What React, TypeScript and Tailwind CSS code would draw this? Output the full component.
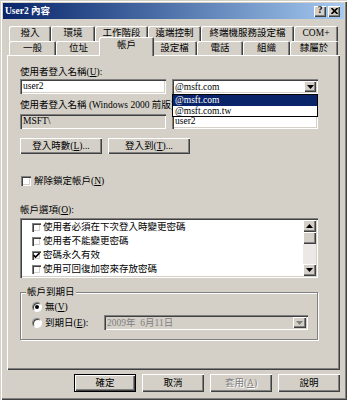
import React from "react";

const raised =
  "shadow-[inset_1px_1px_#fff,inset_-1px_-1px_#404040,inset_-2px_-2px_#808080]";
const sunken =
  "shadow-[inset_1px_1px_#808080,inset_2px_2px_#404040,inset_-1px_-1px_#fff,inset_-2px_-2px_#d4d0c8]";
const tabEdge =
  "shadow-[inset_1px_1px_#fff,inset_-1px_0_#404040,inset_-2px_0_#808080]";

const row1 = [
  { t: "撥入", w: "w-[42px]" },
  { t: "環境", w: "w-[44px]" },
  { t: "工作階段", w: "w-[53px]" },
  { t: "遠端控制", w: "w-[53px]" },
  { t: "終端機服務設定檔", w: "w-[93px]" },
  { t: "COM+", w: "w-[44px]" },
];

const row2 = [
  { t: "一般", w: "w-[47px]" },
  { t: "位址", w: "w-[45px]" },
  { t: "帳戶", w: "w-[55px]", on: true },
  { t: "設定檔", w: "w-[45px]" },
  { t: "電話", w: "w-[46px]" },
  { t: "組織", w: "w-[47px]" },
  { t: "隸屬於", w: "w-[48px]" },
];

const options = [
  { t: "使用者必須在下次登入時變更密碼", on: false },
  { t: "使用者不能變更密碼", on: false },
  { t: "密碼永久有效", on: true },
  { t: "使用可回復加密來存放密碼", on: false },
];

const Arrow = ({ up, gray }: { up?: boolean; gray?: boolean }) => (
  <svg width="7" height="4" viewBox="0 0 7 4">
    <path
      d={up ? "M3.5 0 L7 4 L0 4 Z" : "M0 0 L7 0 L3.5 4 Z"}
      fill={gray ? "#808080" : "#000"}
    />
  </svg>
);

const CheckBox = ({ on, size }: { on?: boolean; size: string }) => (
  <span className={`relative flex shrink-0 items-center justify-center bg-white ${size} ${sunken}`}>
    {on && (
      <svg width="7" height="7" viewBox="0 0 7 7">
        <path d="M0.5 3 L2.5 5 L6.5 1" stroke="#000" strokeWidth="1.6" fill="none" />
      </svg>
    )}
  </span>
);

const Radio = ({ on }: { on?: boolean }) => (
  <span className="flex h-[10px] w-[10px] shrink-0 items-center justify-center rounded-full border border-t-[#808080] border-l-[#808080] border-r-white border-b-white bg-white shadow-[inset_1px_1px_#404040]">
    {on && <span className="h-[4px] w-[4px] rounded-full bg-black" />}
  </span>
);

export default function App() {
  return (
    <div className="flex h-[400px] w-[347px] flex-col bg-[#d4d0c8] p-[3px] font-['Liberation_Serif','Noto_Sans_CJK_TC',serif] text-[9.5px] leading-[12px] text-black shadow-[inset_1px_1px_#d4d0c8,inset_2px_2px_#fff,inset_-1px_-1px_#404040,inset_-2px_-2px_#808080]">
      {/* title bar */}
      <div className="flex h-[16px] items-center bg-linear-to-r from-[#0a246a] to-[#a6caf0] pl-[2px] pr-[4px]">
        <span className="font-bold text-white">User2 內容</span>
        <div className="ml-auto flex gap-[2px]">
          <span className={`flex h-[11px] w-[12px] items-center justify-center bg-[#d4d0c8] font-bold leading-none ${raised}`}>
            ?
          </span>
          <span className={`flex h-[11px] w-[12px] items-center justify-center bg-[#d4d0c8] ${raised}`}>
            <svg width="7" height="6" viewBox="0 0 7 6">
              <path d="M0.5 0 L6.5 6 M6.5 0 L0.5 6" stroke="#000" strokeWidth="1.6" />
            </svg>
          </span>
        </div>
      </div>

      {/* tabs */}
      <div className="mt-[7px] flex h-[15px] pl-[6px]">
        {row1.map((tab) => (
          <div
            key={tab.t}
            className={`${tab.w} flex justify-center rounded-t-[2px] pt-[1px] ${tabEdge}`}
          >
            {tab.t}
          </div>
        ))}
      </div>
      <div className="flex h-[14px] pl-[6px]">
        {row2.map((tab) =>
          tab.on ? (
            <div
              key={tab.t}
              className={`${tab.w} relative z-10 -mx-[2px] -mt-[4px] flex h-[19px] justify-center rounded-t-[2px] bg-[#d4d0c8] pt-[2px] ${tabEdge}`}
            >
              {tab.t}
            </div>
          ) : (
            <div
              key={tab.t}
              className={`${tab.w} flex items-center justify-center rounded-t-[2px] ${tabEdge}`}
            >
              {tab.t}
            </div>
          )
        )}
      </div>

      {/* page */}
      <div className={`ml-[4px] flex h-[315px] w-[333px] flex-col pl-[13px] ${raised}`}>
        <div className="mt-[11px]">
          使用者登入名稱(<u>U</u>):
        </div>
        <div className="mt-[1px] flex h-[15px] gap-[6px]">
          <div className={`w-[146px] bg-white pl-[3px] leading-[15px] ${sunken}`}>user2</div>
          <div className={`relative flex w-[146px] items-center bg-white pl-[3px] pr-[2px] ${sunken}`}>
            <span>@msft.com</span>
            <span className={`ml-auto flex h-[11px] w-[12px] items-center justify-center bg-[#d4d0c8] ${raised}`}>
              <Arrow />
            </span>
            <div className="absolute left-0 top-full z-20 w-full border border-black bg-white">
              <div className="h-[11px] bg-[#0a246a] pl-[2px] leading-[11px] text-white">@msft.com</div>
              <div className="h-[10px] pl-[2px] leading-[10px]">@msft.com.tw</div>
            </div>
          </div>
        </div>

        <div className="mt-[5px] w-[152px] overflow-hidden whitespace-nowrap">
          使用者登入名稱 (Windows 2000 前版)(<u>W</u>):
        </div>
        <div className="mt-[3px] flex h-[15px] gap-[6px]">
          <div className={`w-[146px] bg-[#d4d0c8] pl-[3px] leading-[15px] ${sunken}`}>MSFT\</div>
          <div className={`w-[146px] bg-white pl-[3px] leading-[15px] ${sunken}`}>user2</div>
        </div>

        <div className="mt-[9px] flex gap-[6px]">
          <div className={`flex h-[16px] w-[82px] items-center justify-center ${raised}`}>
            登入時數(<u>L</u>)...
          </div>
          <div className={`flex h-[16px] w-[82px] items-center justify-center ${raised}`}>
            登入到(<u>T</u>)...
          </div>
        </div>

        <div className="mt-[21px] flex h-[12px] items-center gap-[3px] pl-[1px]">
          <CheckBox size="h-[10px] w-[10px]" />
          <span>
            解除鎖定帳戶(<u>N</u>)
          </span>
        </div>

        <div className="mt-[17px]">
          帳戶選項(<u>O</u>):
        </div>
        <div className={`mt-[2px] flex h-[60px] w-[298px] bg-white p-[2px] ${sunken}`}>
          <div className="flex-1 pl-[10px]">
            {options.map((o) => (
              <div key={o.t} className="flex h-[14px] items-center gap-[2px] whitespace-nowrap">
                <CheckBox on={o.on} size="h-[9px] w-[9px]" />
                <span>{o.t}</span>
              </div>
            ))}
          </div>
          <div className="flex w-[13px] flex-col">
            <span className={`flex h-[12px] items-center justify-center bg-[#d4d0c8] ${raised}`}>
              <Arrow up />
            </span>
            <span className={`h-[12px] bg-[#d4d0c8] ${raised}`} />
            <span className="flex-1 bg-[#ebe9e5]" />
            <span className={`flex h-[12px] items-center justify-center bg-[#d4d0c8] ${raised}`}>
              <Arrow />
            </span>
          </div>
        </div>

        <div className="relative mt-[14px] flex h-[48px] w-[298px] flex-col border border-[#808080] pl-[11px] pr-[9px] shadow-[inset_1px_1px_#fff,1px_1px_#fff]">
          <span className="absolute -top-[7px] left-[5px] bg-[#d4d0c8] px-[1px]">帳戶到期日</span>
          <div className="mt-[8px] flex h-[12px] items-center gap-[3px]">
            <Radio on />
            <span>
              無(<u>V</u>)
            </span>
          </div>
          <div className="mt-[2px] flex h-[15px] items-center gap-[3px]">
            <Radio />
            <span>
              到期日(<u>E</u>):
            </span>
            <div className={`ml-auto flex h-[15px] w-[204px] items-center bg-[#d4d0c8] pl-[3px] pr-[2px] ${sunken}`}>
              <span className="whitespace-pre text-[#808080]">2009年  6月11日</span>
              <span className={`ml-auto flex h-[11px] w-[13px] items-center justify-center bg-[#d4d0c8] ${raised}`}>
                <Arrow gray />
              </span>
            </div>
          </div>
        </div>
      </div>

      {/* dialog buttons */}
      <div className="mt-[4px] flex justify-end gap-[6px] pr-[4px]">
        <div className={`flex h-[18px] w-[62px] items-center justify-center border border-black ${raised}`}>
          確定
        </div>
        <div className={`flex h-[18px] w-[62px] items-center justify-center ${raised}`}>取消</div>
        <div className={`flex h-[18px] w-[62px] items-center justify-center text-[#808080] [text-shadow:1px_1px_0_#fff] ${raised}`}>
          套用(<u>A</u>)
        </div>
        <div className={`flex h-[18px] w-[62px] items-center justify-center ${raised}`}>說明</div>
      </div>
    </div>
  );
}
